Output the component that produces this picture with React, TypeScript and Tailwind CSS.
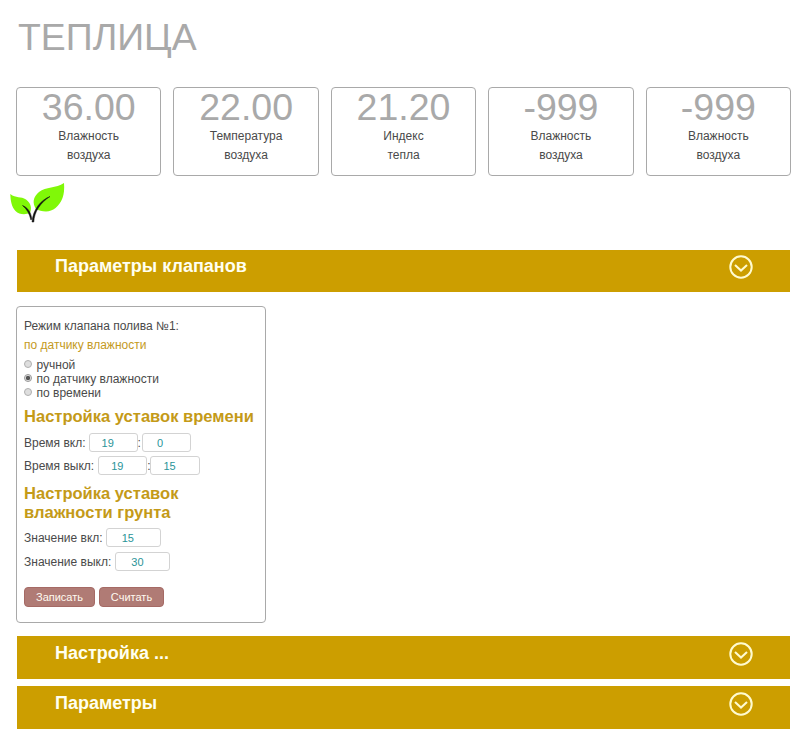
import { useState } from 'react';

interface Sensor {
  value: string;
  label: string[];
}

interface SectionBarProps {
  title: string;
  className: string;
}

interface NumberFieldProps {
  value: string;
  className: string;
}

const sensors: Sensor[] = [
  { value: '36.00', label: ['Влажность', 'воздуха'] },
  { value: '22.00', label: ['Температура', 'воздуха'] },
  { value: '21.20', label: ['Индекс', 'тепла'] },
  { value: '-999', label: ['Влажность', 'воздуха'] },
  { value: '-999', label: ['Влажность', 'воздуха'] },
];

const modes = ['ручной', 'по датчику влажности', 'по времени'];

function LeafLogo() {
  return (
    <svg width="56" height="42" viewBox="0 0 56 42" className="ml-[9px] block">
      <path d="M55 1C55.500 7 55 12 53.500 16C50 25 44 29 37 29.500C33 29.500 29.500 28.500 27 27C23 21 24 15 30 10C37 4.500 47 6.500 55 1Z" fill="#80f808" />
      <path d="M1.300 12C7 16.500 12 14 17 17.500C22 21 23 26 21 31C16 33 10 32.500 6.500 29C2.500 25 1.500 18 1.300 12Z" fill="#80f808" />
      <path d="M41 14.500C32 18 24 27 23 40L24.800 40C25.300 30 31 21 41 14.500Z" fill="#111" stroke="#111" strokeWidth="0.5" />
      <path d="M13.500 23.500C18.500 25.500 22 30 22.800 37L21.900 38C20.500 32 18 27 13.500 23.500Z" fill="#111" stroke="#111" strokeWidth="0.5" />
    </svg>
  );
}

function SectionBar({ title, className }: SectionBarProps) {
  return (
    <button className={`ml-px flex w-[773px] items-start justify-between bg-[#cc9e00] pl-[38px] pr-[37px] text-left text-[#fffff0] ${className}`}>
      <span className="text-[18px] leading-[22px] font-bold">{title}</span>
      <svg width="24" height="24" viewBox="0 0 24 24" fill="none" stroke="#fffbd0" strokeWidth="2">
        <circle cx="12" cy="12" r="10.7" />
        <path d="M6 10L12 15.500L18 10" strokeWidth="2.1" />
      </svg>
    </button>
  );
}

function NumberField({ value, className }: NumberFieldProps) {
  return (
    <input
      defaultValue={value}
      className={`h-[19px] rounded-[3px] border border-[#d3d3d3] bg-white text-[11px] text-[#2a9498] outline-none ${className}`}
    />
  );
}

export default function App() {
  const [mode, setMode] = useState(1);

  return (
    <div className="h-[739px] w-[800px] overflow-hidden bg-white pl-4 font-['Liberation_Sans',Arial,sans-serif] text-xs text-[#4a4a4a]">
      <h1 className="ml-[2px] h-[87px] pt-[15px] text-[37.4px] leading-[44px] text-[#a9a9a9]">ТЕПЛИЦА</h1>

      {/* Sensor readings */}
      <div className="flex w-[775px] gap-3">
        {sensors.map((sensor, i) => (
          <div key={i} className="h-[89px] flex-1 rounded-[4px] border border-[#a9a9a9] text-center">
            <div className="h-[39px] text-[37.5px] leading-[39px] text-[#a9a9a9]">{sensor.value}</div>
            {sensor.label.map((line) => (
              <div key={line} className="h-[19px] leading-[19px]">{line}</div>
            ))}
          </div>
        ))}
      </div>

      <div className="-ml-4 h-[74px] pt-[6px]">
        <LeafLogo />
      </div>

      <SectionBar title="Параметры клапанов" className="h-[42px] pt-[5px]" />

      {/* Valve settings */}
      <div className="mt-[14px] h-[317px] w-[250px] rounded-[4px] border border-[#a9a9a9] pl-[7px] pt-[10px]">
        <p className="h-[19px] leading-[19px]">Режим клапана полива №1:</p>
        <p className="h-[22px] leading-[19px] text-[#c49a22]">{modes[mode]}</p>

        {modes.map((name, i) => (
          <label key={name} className="flex h-[14px] items-center gap-[4.5px] leading-[14px]">
            <input
              type="radio"
              name="mode"
              checked={mode === i}
              onChange={() => setMode(i)}
              className="mb-[2px] size-[8px] appearance-none rounded-full border border-[#b0b0b0] bg-[#dedede] checked:border-[#999] checked:bg-[radial-gradient(circle,#555_0_1.8px,#e5e5e5_2.6px)]"
            />
            {name}
          </label>
        ))}

        <h2 className="mt-[7px] text-[16.55px] leading-[19px] font-bold text-[#c49a18]">Настройка уставок времени</h2>
        <div className="mt-[7px] flex h-[19px] items-center">
          <span>Время вкл:</span>
          <NumberField value="19" className="ml-[3px] w-[49px] pl-[12px]" />
          <span>:</span>
          <NumberField value="0" className="ml-px w-[49px] pl-[14px]" />
        </div>
        <div className="mt-[4px] flex h-[19px] items-center">
          <span>Время выкл:</span>
          <NumberField value="19" className="ml-[4px] w-[49px] pl-[12px]" />
          <span>:</span>
          <NumberField value="15" className="-ml-px w-[50px] pl-[13px]" />
        </div>

        <h2 className="mt-[9px] w-[190px] text-[16.55px] leading-[19px] font-bold text-[#c49a18]">Настройка уставок влажности грунта</h2>
        <div className="mt-[6px] flex h-[19px] items-center">
          <span>Значение вкл:</span>
          <NumberField value="15" className="ml-[3px] w-[55px] pl-[15px]" />
        </div>
        <div className="mt-[5px] flex h-[19px] items-center">
          <span>Значение выкл:</span>
          <NumberField value="30" className="ml-[4px] w-[55px] pl-[15px]" />
        </div>

        <div className="mt-[16px] flex gap-1 text-[11px] text-[#fffaf0]">
          <button className="h-5 w-[71px] rounded-[4px] border border-[#a56a65] bg-[#b07b75]">Записать</button>
          <button className="h-5 w-[65px] rounded-[4px] border border-[#a56a65] bg-[#b07b75]">Считать</button>
        </div>
      </div>

      <SectionBar title="Настройка ..." className="mt-[13px] h-[43px] pt-[6px]" />
      <SectionBar title="Параметры" className="mt-[7px] h-[43px] pt-[6px]" />
    </div>
  );
}
